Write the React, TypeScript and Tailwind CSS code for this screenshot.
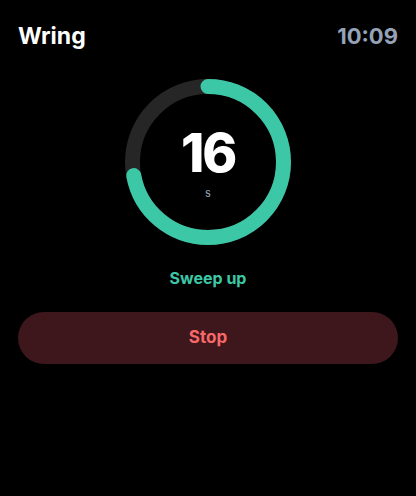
const ringSize = 166;
const stroke = 15;
const radius = (ringSize - stroke) / 2;
const circumference = 2 * Math.PI * radius;
const progress = 0.72;

const App = () => {
  return (
    <div
      className="flex h-[496px] w-[416px] flex-col bg-black px-[18px] text-white"
      style={{ fontFamily: "Inter, 'Noto Sans', sans-serif" }}
    >
      <header className="flex items-center justify-between pt-[20px]">
        <h1 className="text-[23px] font-bold leading-8">Wring</h1>
        <span className="text-[22px] font-bold leading-8 text-[#94a3b8]">10:09</span>
      </header>

      <div className="mt-[27px] flex justify-center">
        <div className="relative h-[166px] w-[166px]">
          <svg width={ringSize} height={ringSize} className="-rotate-90">
            <circle
              cx={ringSize / 2}
              cy={ringSize / 2}
              r={radius}
              fill="none"
              stroke="#262626"
              strokeWidth={stroke}
            />
            <circle
              cx={ringSize / 2}
              cy={ringSize / 2}
              r={radius}
              fill="none"
              stroke="#3cc7a6"
              strokeWidth={stroke}
              strokeLinecap="round"
              strokeDasharray={circumference}
              strokeDashoffset={circumference * (1 - progress)}
            />
          </svg>
          <div className="absolute inset-0 flex flex-col items-center justify-center">
            <span className="mt-[2px] text-[53px] font-extrabold leading-none tracking-[-0.04em]">
              16
            </span>
            <span className="mt-[8px] text-[11px] leading-none text-[#94a3b8]">s</span>
          </div>
        </div>
      </div>

      <p className="mt-[21px] text-center text-[16px] font-bold text-[#3cc7a6]">Sweep up</p>

      <button className="mt-[22px] h-[52px] w-full rounded-full bg-[#3d171b] text-[17px] font-bold text-[#f86868]">
        Stop
      </button>
    </div>
  );
};

export default App;
